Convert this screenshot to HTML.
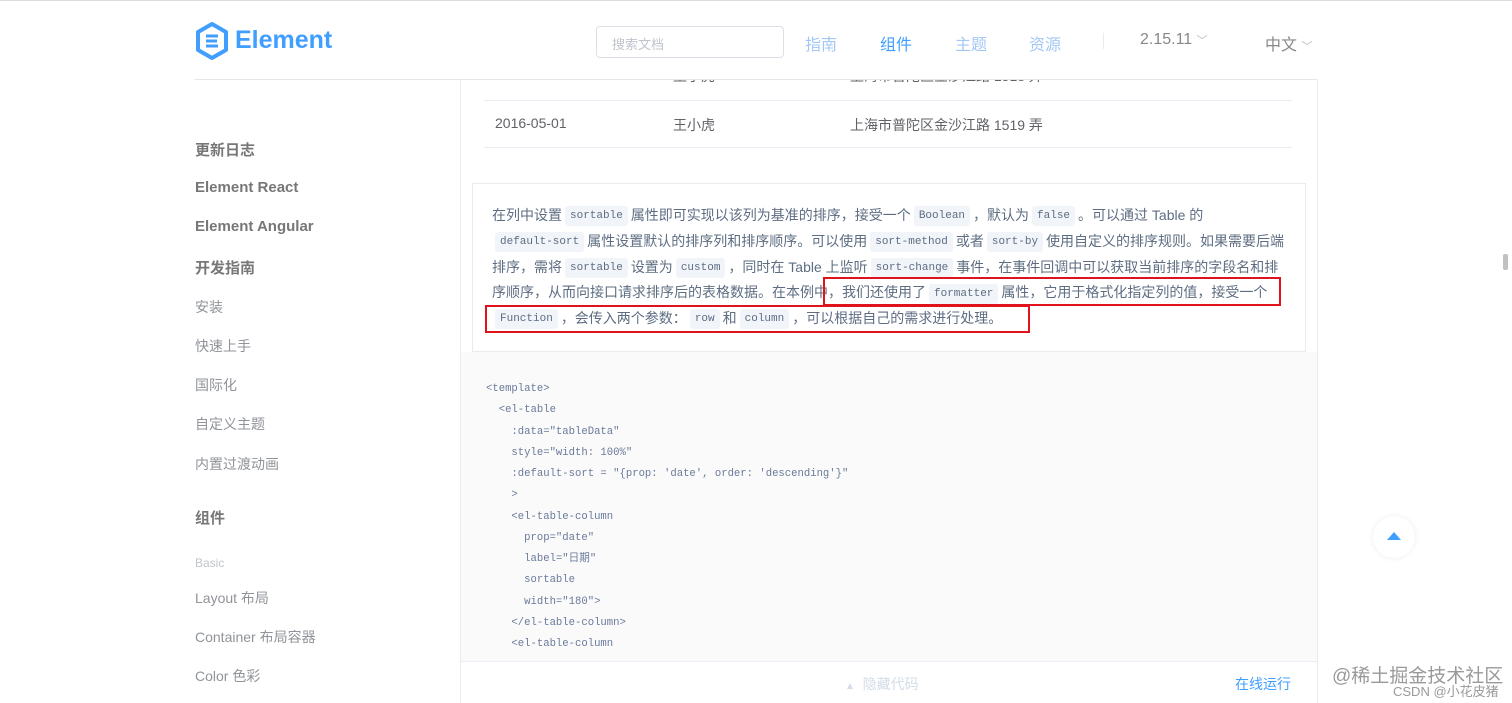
<!DOCTYPE html>
<html><head><meta charset="utf-8"><style>
*{margin:0;padding:0;box-sizing:border-box}
body{width:1512px;height:702px;overflow:hidden;background:#fff;font-family:"Liberation Sans","Noto Sans CJK SC",sans-serif;position:relative;border-top:1px solid #dcdcdc}
.a{position:absolute}
.hdr{left:195px;top:78px;width:1122px;height:1px;background:#e6e6e6}
.nav{top:30px;font-size:16px;color:#a3c8f5}
.side{left:195px;font-size:14px;color:#909399}
.sb{font-size:15px;font-weight:bold;color:#777}
code{display:inline-block;font-family:"Liberation Mono",monospace;font-size:11px;line-height:20px;height:20px;vertical-align:middle;background:#f1f4f9;color:#5e6d82;padding:0 5px;border-radius:3px;margin:0 3px}
.desc{left:472px;top:182px;width:834px;height:169px;border:1px solid #ebebeb;padding:19px 18px 0 19px;font-size:14px;line-height:25.8px;color:#5e6d82}
pre{font-family:"Liberation Mono",monospace;font-size:10.6px;line-height:21.25px;color:#6a7a9a}
.red{border:2px solid #e0121c}
</style></head><body>
<div class="a hdr"></div>
<svg class="a" style="left:195px;top:21px" width="34" height="38" viewBox="0 0 34 38"><path d="M17 2 L31 10 L31 28 L17 36 L3 28 L3 10 Z" fill="none" stroke="#409eff" stroke-width="4" stroke-linejoin="round"/><path d="M11 14 L23 14 M11 19 L22 19 M11 24 L23 24" stroke="#409eff" stroke-width="3"/></svg>
<div class="a" style="left:235px;top:25px;font-size:25px;font-weight:bold;color:#409eff">Element</div>
<div class="a" style="left:596px;top:25px;width:188px;height:32px;border:1px solid #dcdfe6;border-radius:4px;font-size:13px;color:#c0c4cc;padding:7px 15px">搜索文档</div>
<div class="a nav" style="left:805px">指南</div>
<div class="a nav" style="left:880px;color:#409eff">组件</div>
<div class="a nav" style="left:955px">主题</div>
<div class="a nav" style="left:1029px">资源</div>
<div class="a" style="left:1103px;top:32px;width:1px;height:16px;background:#ebebeb"></div>
<div class="a" style="left:1140px;top:30px;font-size:16px;color:#888">2.15.11 <span style="font-size:11px;color:#bbb">﹀</span></div>
<div class="a" style="left:1265px;top:30px;font-size:16px;color:#888">中文 <span style="font-size:11px;color:#bbb">﹀</span></div>

<div class="a side sb" style="top:138px">更新日志</div>
<div class="a side sb" style="top:178px">Element React</div>
<div class="a side sb" style="top:217px">Element Angular</div>
<div class="a side sb" style="top:256px">开发指南</div>
<div class="a side" style="top:296px">安装</div>
<div class="a side" style="top:335px">快速上手</div>
<div class="a side" style="top:374px">国际化</div>
<div class="a side" style="top:413px">自定义主题</div>
<div class="a side" style="top:453px">内置过渡动画</div>
<div class="a side sb" style="top:506px">组件</div>
<div class="a side" style="top:555px;font-size:12px;color:#c0c4cc">Basic</div>
<div class="a side" style="top:587px">Layout 布局</div>
<div class="a side" style="top:626px">Container 布局容器</div>
<div class="a side" style="top:665px">Color 色彩</div>

<div class="a" style="left:460px;top:79px;width:1px;height:623px;background:#ebebeb"></div>
<div class="a" style="left:1317px;top:79px;width:1px;height:623px;background:#ebebeb"></div>
<div class="a" style="left:484px;top:79px;width:808px;height:20px;overflow:hidden"><div style="position:absolute;top:-14px;left:11px;font-size:14px;color:#606266">2016-05-02<span style="position:absolute;left:178px;white-space:nowrap">王小虎</span><span style="position:absolute;left:355px;white-space:nowrap">上海市普陀区金沙江路 1518 弄</span></div></div>
<div class="a" style="left:484px;top:99px;width:808px;height:1px;background:#ebeef5"></div>
<div class="a" style="left:484px;top:146px;width:808px;height:1px;background:#ebeef5"></div>
<div class="a" style="left:495px;top:114px;font-size:14px;color:#606266">2016-05-01</div>
<div class="a" style="left:673px;top:114px;font-size:14px;color:#606266">王小虎</div>
<div class="a" style="left:850px;top:114px;font-size:14px;color:#606266">上海市普陀区金沙江路 1519 弄</div>

<div class="a desc">在列中设置<code>sortable</code>属性即可实现以该列为基准的排序，接受一个<code>Boolean</code>，默认为<code>false</code>。可以通过 Table 的<br><code>default-sort</code>属性设置默认的排序列和排序顺序。可以使用<code>sort-method</code>或者<code>sort-by</code>使用自定义的排序规则。如果需要后端<br>排序，需将<code>sortable</code>设置为<code>custom</code>，同时在 Table 上监听<code>sort-change</code>事件，在事件回调中可以获取当前排序的字段名和排<br>序顺序，从而向接口请求排序后的表格数据。在本例中，我们还使用了<code>formatter</code>属性，它用于格式化指定列的值，接受一个<br><code>Function</code>，会传入两个参数：<code>row</code>和<code>column</code>，可以根据自己的需求进行处理。</div>
<div class="a red" style="left:823px;top:276px;width:458px;height:29px"></div>
<div class="a red" style="left:485px;top:304px;width:545px;height:28px"></div>

<div class="a" style="left:461px;top:351px;width:856px;height:309px;background:#fafafa"></div>
<pre class="a" style="left:486px;top:378px">&lt;template&gt;
  &lt;el-table
    :data="tableData"
    style="width: 100%"
    :default-sort = "{prop: 'date', order: 'descending'}"
    &gt;
    &lt;el-table-column
      prop="date"
      label="日期"
      sortable
      width="180"&gt;
    &lt;/el-table-column&gt;
    &lt;el-table-column</pre>
<div class="a" style="left:461px;top:660px;width:856px;height:1px;background:#eaeefb"></div>
<div class="a" style="left:845px;top:673px;font-size:14px;color:#d3dce6"><span style="font-size:10px">▲</span>&nbsp; 隐藏代码</div>
<div class="a" style="left:1235px;top:673px;font-size:14px;color:#409eff">在线运行</div>

<div class="a" style="left:1373px;top:515px;width:42px;height:42px;border-radius:50%;background:#fff;box-shadow:0 0 6px rgba(0,0,0,.08)"></div>
<div class="a" style="left:1387px;top:531px;width:0;height:0;border-left:7px solid transparent;border-right:7px solid transparent;border-bottom:8px solid #409eff"></div>
<div class="a" style="left:1503px;top:253px;width:5px;height:16px;background:#c1c1c1;border-radius:2px"></div>
<div class="a" style="left:1332px;top:660px;font-size:19px;color:#999">@稀土掘金技术社区</div>
<div class="a" style="left:1393px;top:680px;font-size:13px;color:#999">CSDN @小花皮猪</div>
</body></html>
